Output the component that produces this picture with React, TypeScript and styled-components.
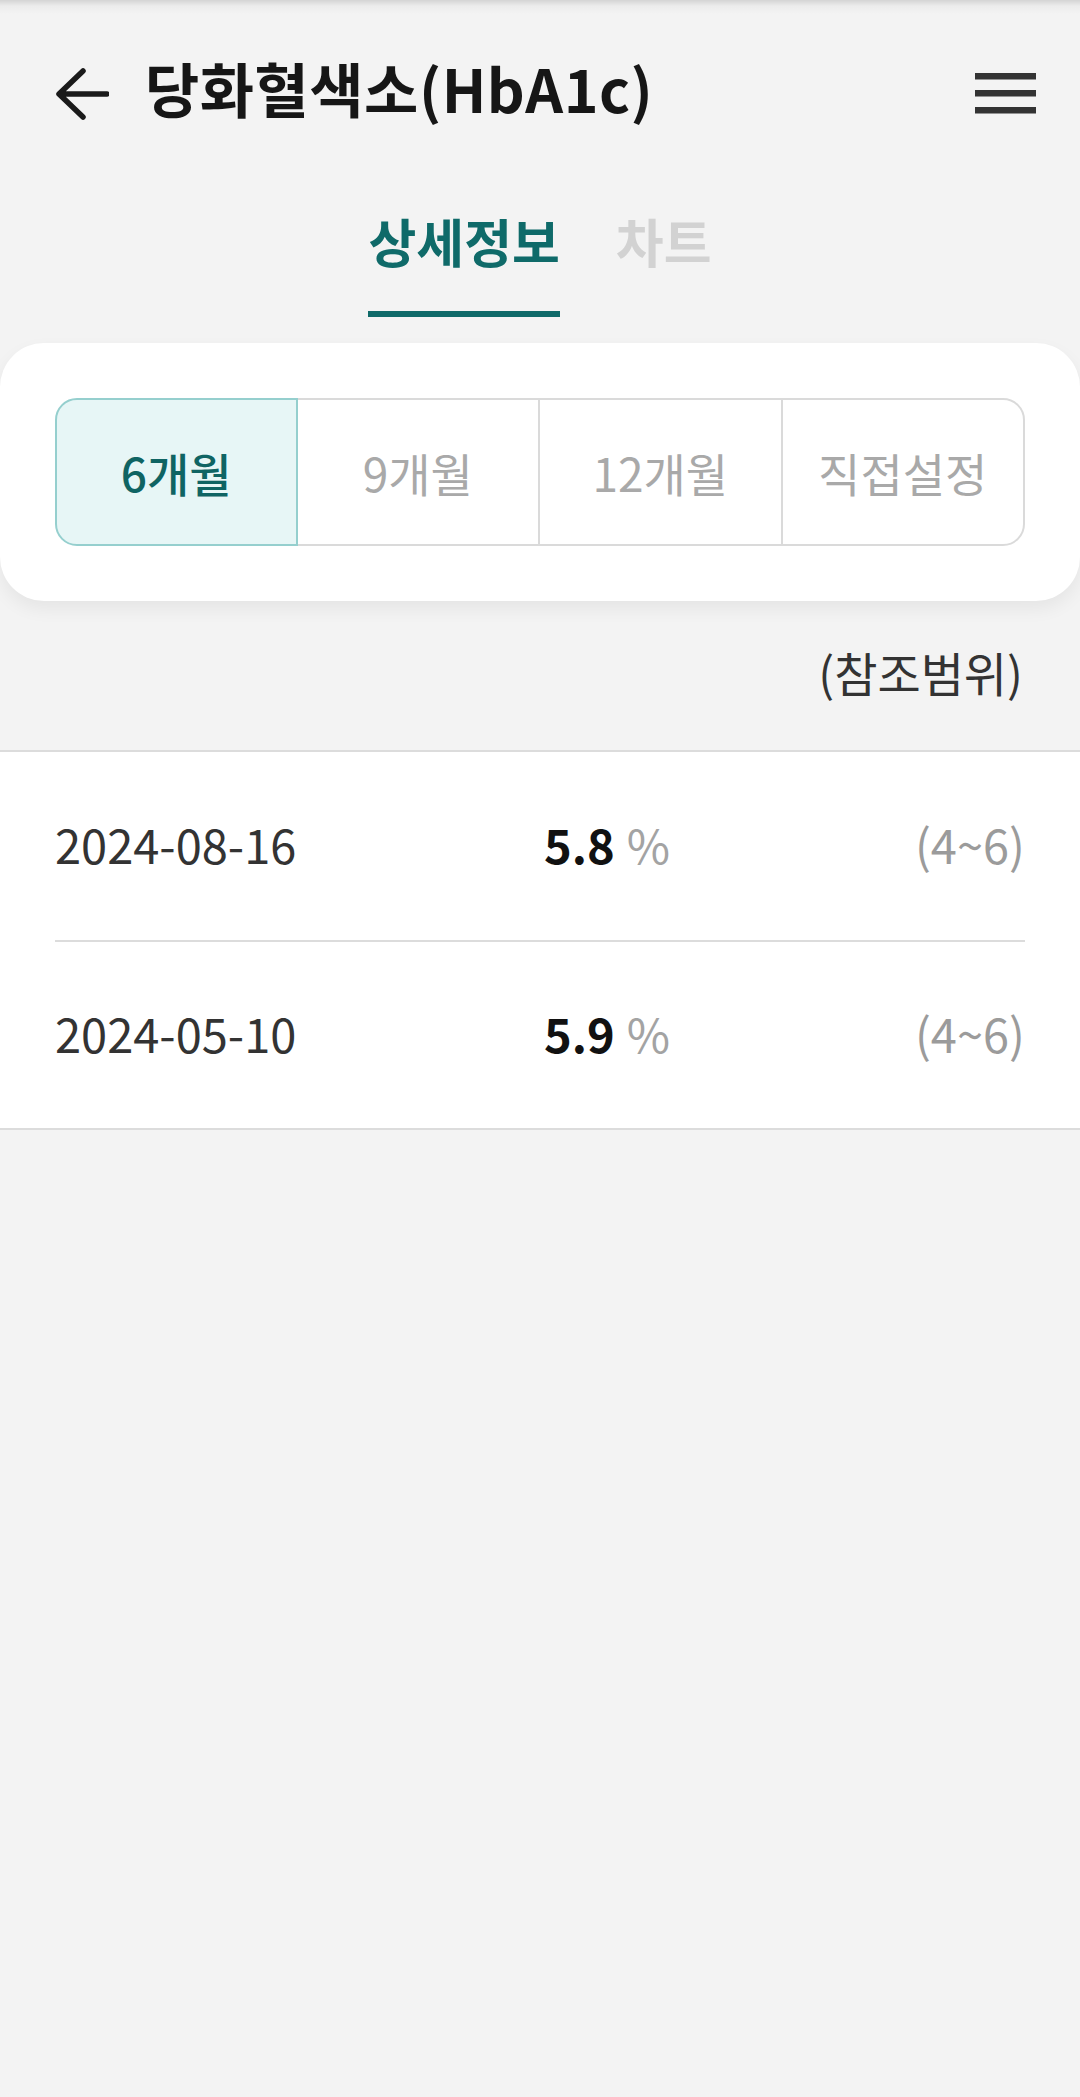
import React, { useState } from 'react'
import styled, { createGlobalStyle } from 'styled-components'

const GlobalStyle = createGlobalStyle`
  html, body {
    margin: 0;
    padding: 0;
    background: #f3f3f3;
  }
  body {
    font-family: 'Noto Sans CJK KR', 'Noto Sans', sans-serif;
    color: #333;
  }
  #root {
    min-height: 100vh;
  }
`

const Page = styled.div`
  width: 1080px;
  min-height: 2097px;
  background: #f3f3f3;
`

const Header = styled.header`
  height: 188px;
  display: flex;
  align-items: center;
  padding: 0 44px 0 55px;
  box-sizing: border-box;
  background: linear-gradient(to bottom, #d4d4d4 0, #ececec 6px, #f3f3f3 14px);
`

const IconButton = styled.button`
  border: none;
  background: none;
  padding: 0;
  display: flex;
  align-items: center;
  justify-content: center;
  cursor: pointer;
`

const Title = styled.h1`
  flex: 1;
  margin: 0 0 12px 36px;
  font-size: 59px;
  font-weight: 700;
  line-height: 1.2;
  color: #161616;
  letter-spacing: 0.5px;
`

const TabBar = styled.nav`
  display: flex;
  justify-content: center;
  gap: 52px;
  padding-top: 22px;
  margin-bottom: 26px;
`

const Tab = styled.button<{ $active?: boolean }>`
  border: none;
  background: none;
  padding: 0 2px;
  display: flex;
  flex-direction: column;
  align-items: stretch;
  cursor: pointer;
  font-family: inherit;
  font-size: 52px;
  font-weight: 700;
  line-height: 62px;
  color: ${props => props.$active ? '#0f6a69' : '#d2d2d2'};

  &::after {
    content: '';
    display: block;
    height: 6px;
    margin-top: 39px;
    background: ${props => props.$active ? '#0f6a69' : 'transparent'};
  }
`

const FilterCard = styled.section`
  background: #fff;
  border-radius: 44px;
  padding: 55px;
  box-shadow: 0 8px 18px rgba(0, 0, 0, 0.06);
`

const Segmented = styled.div`
  display: grid;
  grid-template-columns: repeat(4, 1fr);
  height: 148px;
`

const Segment = styled.button<{ $active?: boolean; $first?: boolean; $last?: boolean }>`
  position: relative;
  z-index: ${props => props.$active ? 1 : 0};
  margin-left: ${props => props.$first ? '0' : '-2px'};
  border: 2px solid ${props => props.$active ? '#95cfce' : '#dadada'};
  border-radius: ${props => props.$first ? '22px 0 0 22px' : props.$last ? '0 22px 22px 0' : '0'};
  background: ${props => props.$active ? '#e7f6f6' : '#fff'};
  font-family: inherit;
  font-size: 46px;
  font-weight: ${props => props.$active ? 500 : 400};
  color: ${props => props.$active ? '#0f6463' : '#a9a9a9'};
  cursor: pointer;
`

const RefLabel = styled.div`
  height: 149px;
  display: flex;
  align-items: center;
  justify-content: flex-end;
  padding: 0 57px 8px 0;
  box-sizing: border-box;
  font-size: 47px;
  color: #333;
`

const List = styled.ul`
  list-style: none;
  margin: 0;
  padding: 0 55px;
  background: #fff;
  border-top: 2px solid #dcdcdc;
  border-bottom: 2px solid #dcdcdc;
`

const Row = styled.li`
  height: 188px;
  display: grid;
  grid-template-columns: 1fr 1fr;
  align-items: center;
  padding-bottom: 6px;
  box-sizing: border-box;
  font-size: 47px;
  & + & {
    border-top: 2px solid #dcdcdc;
  }
`

const DateText = styled.span`
  color: #333;
`

const ValueCell = styled.div`
  display: flex;
  justify-content: space-between;
  align-items: center;
  padding-left: 4px;
`

const Value = styled.span`
  font-weight: 700;
  color: #111;
`

const Unit = styled.span`
  margin-left: 12px;
  font-weight: 400;
  color: #a3a3a3;
`

const Range = styled.span`
  color: #9b9b9b;
`

const periods = ['6개월', '9개월', '12개월', '직접설정']

const results = [
  { date: '2024-08-16', value: '5.8', unit: '%', range: '(4~6)' },
  { date: '2024-05-10', value: '5.9', unit: '%', range: '(4~6)' },
]

const BackIcon = () => (
  <svg width="54" height="52" viewBox="0 0 54 52" fill="none">
    <path d="M52 26H5M28 3L4 26l24 23" stroke="#1a1a1a" strokeWidth="5.5" strokeLinecap="round" strokeLinejoin="round" />
  </svg>
)

const MenuIcon = () => (
  <svg width="61" height="42" viewBox="0 0 61 42">
    <rect x="0" y="0" width="61" height="6.5" fill="#333" />
    <rect x="0" y="17" width="61" height="6.5" fill="#333" />
    <rect x="0" y="34" width="61" height="6.5" fill="#333" />
  </svg>
)

export default function App() {
  const [tab, setTab] = useState<'info' | 'chart'>('info')
  const [period, setPeriod] = useState(0)

  return (
    <Page>
      <GlobalStyle />
      <Header>
        <IconButton aria-label="뒤로">
          <BackIcon />
        </IconButton>
        <Title>당화혈색소(HbA1c)</Title>
        <IconButton aria-label="메뉴">
          <MenuIcon />
        </IconButton>
      </Header>
      <TabBar>
        <Tab $active={tab === 'info'} onClick={() => setTab('info')}>상세정보</Tab>
        <Tab $active={tab === 'chart'} onClick={() => setTab('chart')}>차트</Tab>
      </TabBar>
      <FilterCard>
        <Segmented>
          {periods.map((label, index) => (
            <Segment
              key={label}
              $active={period === index}
              $first={index === 0}
              $last={index === periods.length - 1}
              onClick={() => setPeriod(index)}
            >
              {label}
            </Segment>
          ))}
        </Segmented>
      </FilterCard>
      <RefLabel>(참조범위)</RefLabel>
      <List>
        {results.map(item => (
          <Row key={item.date}>
            <DateText>{item.date}</DateText>
            <ValueCell>
              <span>
                <Value>{item.value}</Value>
                <Unit>{item.unit}</Unit>
              </span>
              <Range>{item.range}</Range>
            </ValueCell>
          </Row>
        ))}
      </List>
    </Page>
  )
}
